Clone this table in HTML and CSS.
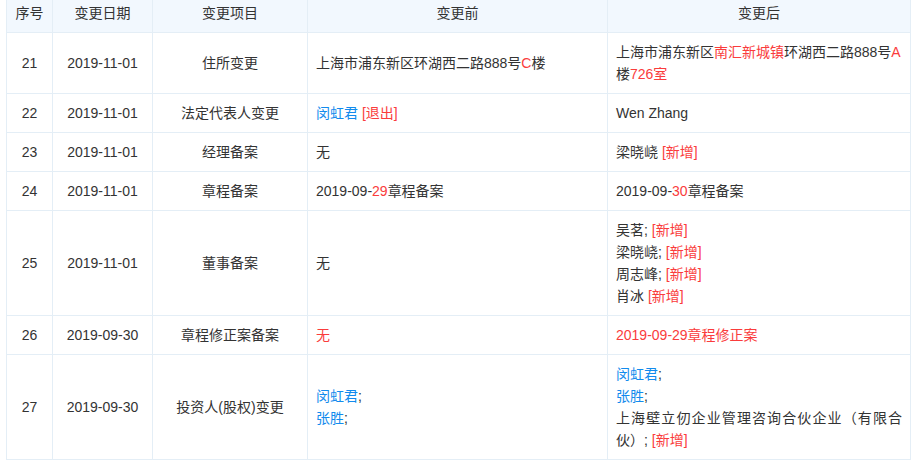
FILE: index.html
```html
<!DOCTYPE html>
<html lang="zh-CN">
<head>
<meta charset="utf-8">
<title>变更记录</title>
<link rel="stylesheet" href="styles.css">
</head>
<body>
<div class="wrap">
<table class="ntable">
  <colgroup>
    <col class="c-no">
    <col class="c-date">
    <col class="c-item">
    <col class="c-before">
    <col class="c-after">
  </colgroup>
  <thead>
    <tr>
      <th>序号</th>
      <th>变更日期</th>
      <th>变更项目</th>
      <th>变更前</th>
      <th>变更后</th>
    </tr>
  </thead>
  <tbody>
    <tr>
      <td class="tc">21</td>
      <td class="tc">2019-11-01</td>
      <td class="tc">住所变更</td>
      <td>上海市浦东新区环湖西二路888号<em class="red">C</em>楼</td>
      <td>上海市浦东新区<em class="red">南汇新城镇</em>环湖西二路888号<em class="red">A</em>楼<em class="red">726室</em></td>
    </tr>
    <tr>
      <td class="tc">22</td>
      <td class="tc">2019-11-01</td>
      <td class="tc">法定代表人变更</td>
      <td><a class="blue">闵虹君</a> <em class="red">[退出]</em></td>
      <td>Wen Zhang</td>
    </tr>
    <tr>
      <td class="tc">23</td>
      <td class="tc">2019-11-01</td>
      <td class="tc">经理备案</td>
      <td>无</td>
      <td>梁晓峣 <em class="red">[新增]</em></td>
    </tr>
    <tr>
      <td class="tc">24</td>
      <td class="tc">2019-11-01</td>
      <td class="tc">章程备案</td>
      <td>2019-09-<em class="red">29</em>章程备案</td>
      <td>2019-09-<em class="red">30</em>章程备案</td>
    </tr>
    <tr>
      <td class="tc">25</td>
      <td class="tc">2019-11-01</td>
      <td class="tc">董事备案</td>
      <td>无</td>
      <td>吴茗; <em class="red">[新增]</em><br>梁晓峣; <em class="red">[新增]</em><br>周志峰; <em class="red">[新增]</em><br>肖冰 <em class="red">[新增]</em></td>
    </tr>
    <tr>
      <td class="tc">26</td>
      <td class="tc">2019-09-30</td>
      <td class="tc">章程修正案备案</td>
      <td><em class="red">无</em></td>
      <td><em class="red">2019-09-29章程修正案</em></td>
    </tr>
    <tr>
      <td class="tc">27</td>
      <td class="tc">2019-09-30</td>
      <td class="tc">投资人(股权)变更</td>
      <td><a class="blue">闵虹君</a>;<br><a class="blue">张胜</a>;</td>
      <td class="just"><a class="blue">闵虹君</a>;<br><a class="blue">张胜</a>;<br>上海壁立仞企业管理咨询合伙企业（有限合伙）; <em class="red">[新增]</em></td>
    </tr>
  </tbody>
</table>
</div>
</body>
</html>
```

FILE: styles.css
```css
html, body {
  margin: 0;
  padding: 0;
  background: #fff;
}

body {
  font-family: "Liberation Sans", Arial, "Noto Sans CJK SC", sans-serif;
  font-size: 14px;
  color: #333;
}

.wrap {
  padding: 0 10px 0 6px;
}

.ntable {
  width: 904px;
  border-collapse: collapse;
  table-layout: fixed;
}

.c-no { width: 46px; }
.c-date { width: 100px; }
.c-item { width: 155px; }
.c-before { width: 300px; }
.c-after { width: 303px; }

.ntable th,
.ntable td {
  border: 1px solid #e4eef6;
  line-height: 22px;
  vertical-align: middle;
  word-break: break-all;
}

.ntable th {
  background: #f2f8fe;
  font-weight: normal;
  text-align: center;
  padding: 2px 8px 8px;
  border-top: none;
}

.ntable td {
  padding: 8px 8px;
  text-align: left;
}

.ntable td.tc {
  text-align: center;
}

.ntable td.just {
  text-align: justify;
}

.red {
  color: #fa3c3c;
  font-style: normal;
}

.blue {
  color: #128bed;
  text-decoration: none;
}
```
